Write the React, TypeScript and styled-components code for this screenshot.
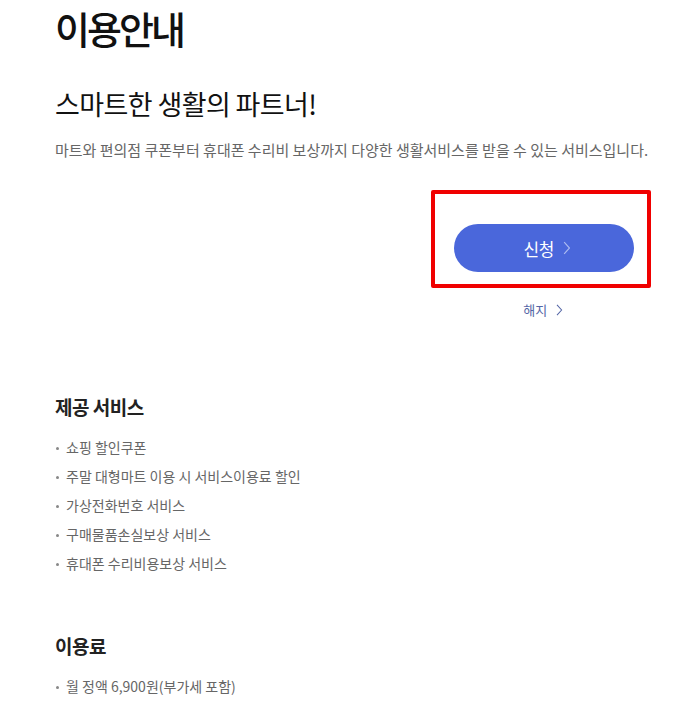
import React from "react";
import styled, { createGlobalStyle } from "styled-components";

const GlobalStyle = createGlobalStyle`
  html, body {
    margin: 0;
    padding: 0;
    background: #ffffff;
  }
  body {
    font-family: "Noto Sans CJK KR", "Noto Sans", sans-serif;
    color: #111111;
  }
`;

const serviceItems = [
  "쇼핑 할인쿠폰",
  "주말 대형마트 이용 시 서비스이용료 할인",
  "가상전화번호 서비스",
  "구매물품손실보상 서비스",
  "휴대폰 수리비용보상 서비스",
];

const feeItems = ["월 정액 6,900원(부가세 포함)"];

const Chevron = ({ color, size }: { color: string; size: number }) => (
  <svg width={size * 0.55} height={size} viewBox="0 0 7 13" fill="none">
    <path d="M1 1l5 5.5L1 12" stroke={color} strokeWidth="1.1" />
  </svg>
);

const App = () => {
  return (
    <>
      <GlobalStyle />
      <Page>
        <Title>이용안내</Title>
        <Subtitle>스마트한 생활의 파트너!</Subtitle>
        <Description>
          마트와 편의점 쿠폰부터 휴대폰 수리비 보상까지 다양한 생활서비스를 받을 수 있는 서비스입니다.
        </Description>

        <Actions>
          <ActionColumn>
            <Highlight>
              <ApplyButton type="button">
                신청
                <Chevron color="#aebcf0" size={14} />
              </ApplyButton>
            </Highlight>
            <CancelLink href="#">
              해지
              <Chevron color="#5466a6" size={12} />
            </CancelLink>
          </ActionColumn>
        </Actions>

        <Section>
          <SectionTitle>제공 서비스</SectionTitle>
          <BulletList>
            {serviceItems.map((item) => (
              <BulletItem key={item}>{item}</BulletItem>
            ))}
          </BulletList>
        </Section>

        <Section>
          <SectionTitle>이용료</SectionTitle>
          <BulletList>
            {feeItems.map((item) => (
              <BulletItem key={item}>{item}</BulletItem>
            ))}
          </BulletList>
        </Section>
      </Page>
    </>
  );
};

export default App;

const Page = styled.div`
  padding: 0 38px 6px 55px;
`;

const Title = styled.h1`
  margin: 4px 0 0;
  font-size: 38px;
  line-height: 48px;
  font-weight: 500;
  letter-spacing: -3px;
  color: #111111;
`;

const Subtitle = styled.h2`
  margin: 34px 0 0;
  font-size: 27px;
  line-height: 36px;
  font-weight: 400;
  letter-spacing: -0.6px;
  color: #111111;
`;

const Description = styled.p`
  margin: 18px 0 0;
  font-size: 15px;
  line-height: 20px;
  letter-spacing: 0;
  color: #666666;
`;

const Actions = styled.div`
  display: flex;
  justify-content: flex-end;
  margin-top: 30px;
`;

const ActionColumn = styled.div`
  display: flex;
  flex-direction: column;
  align-items: center;
`;

const Highlight = styled.div`
  border: 4px solid #f00000;
  border-radius: 2px;
  padding: 30px 13px 12px 19px;
`;

const ApplyButton = styled.button`
  display: flex;
  align-items: center;
  justify-content: center;
  gap: 9px;
  width: 180px;
  height: 48px;
  border: none;
  border-radius: 24px;
  background: #4a67db;
  color: #ffffff;
  font-family: "Noto Sans CJK KR", "Noto Sans", sans-serif;
  font-size: 17px;
  letter-spacing: -0.5px;
  padding: 0 0 0 6px;
  cursor: pointer;
`;

const CancelLink = styled.a`
  display: flex;
  align-items: center;
  gap: 9px;
  margin-top: 12px;
  margin-left: 4px;
  font-size: 13px;
  line-height: 20px;
  color: #5466a6;
  text-decoration: none;
`;

const Section = styled.section`
  margin-top: 74px;
  & + & {
    margin-top: 55px;
  }
`;

const SectionTitle = styled.h3`
  margin: 0;
  font-size: 19px;
  line-height: 26px;
  font-weight: 600;
  letter-spacing: -0.5px;
  color: #222222;
`;

const BulletList = styled.ul`
  list-style: none;
  margin: 13px 0 0;
  padding: 0;
`;

const BulletItem = styled.li`
  position: relative;
  padding-left: 11px;
  font-size: 14px;
  line-height: 29px;
  letter-spacing: 0;
  color: #666666;
  &::before {
    content: "";
    position: absolute;
    left: 1px;
    top: 14px;
    width: 3px;
    height: 3px;
    border-radius: 50%;
    background: #888888;
  }
`;
